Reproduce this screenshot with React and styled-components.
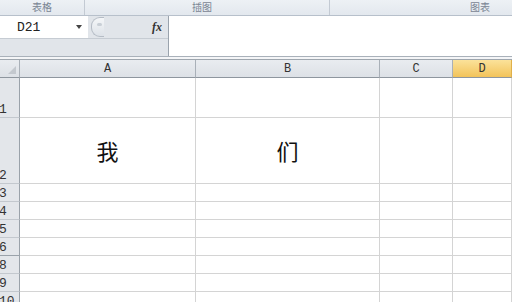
import React from 'react';
import styled, { createGlobalStyle } from 'styled-components';

const Global = createGlobalStyle`
  html, body { margin: 0; padding: 0; background: #fff; overflow: hidden; }
  body { font-family: "Liberation Sans", "Noto Sans CJK SC", sans-serif; }
`;

const Page = styled.div`
  width: 512px;
  height: 302px;
  overflow: hidden;
  display: flex;
  flex-direction: column;
  background: #fff;
  & > * { flex-shrink: 0; }
`;

const Ribbon = styled.div`
  height: 15px;
  display: grid;
  grid-template-columns: 85px 245px 1fr;
  background: linear-gradient(#edf1f5, #e3e8ee);
  border-bottom: 1px solid #b7c0cb;
`;

const GroupLabel = styled.div`
  font-family: "Noto Sans CJK SC", sans-serif;
  font-size: 10px;
  line-height: 14px;
  color: #7a8593;
  text-align: ${p => p.align || 'center'};
  padding-right: ${p => p.pr || 0}px;
  border-right: ${p => (p.sep ? '1px solid #c3cad3' : 'none')};
`;

const FormulaRow = styled.div`
  height: 40px;
  display: flex;
  background: #e1e5ea;
  border-bottom: 1px solid #a9b1ba;
`;

const LeftPane = styled.div`
  width: 168px;
  display: flex;
  flex-direction: column;
`;

const NameRow = styled.div`
  height: 22px;
  display: flex;
  align-items: center;
  border-bottom: 1px solid #c6ccd3;
`;

const NameBox = styled.div`
  width: 88px;
  height: 22px;
  background: #fff;
  display: flex;
  align-items: center;
  justify-content: space-between;
  padding: 0 6px 0 17px;
  box-sizing: border-box;
  font-family: "Liberation Mono", monospace;
  font-size: 13px;
  color: #222;
`;

const Caret = styled.span`
  width: 0;
  height: 0;
  border-left: 3px solid transparent;
  border-right: 3px solid transparent;
  border-top: 4px solid #444;
`;

const Pill = styled.div`
  width: 12px;
  height: 18px;
  margin-left: 3px;
  border: 1px solid #b5bcc5;
  border-radius: 9px 0 0 9px;
  border-right: none;
  background: linear-gradient(#f4f6f8, #dde2e8);
  position: relative;
  &::after {
    content: '';
    position: absolute;
    left: 5px;
    top: 5px;
    width: 5px;
    height: 3px;
    border-radius: 2px;
    background: #c9cfd6;
  }
`;

const Fx = styled.span`
  margin-left: auto;
  margin-right: 6px;
  font-family: "Liberation Serif", serif;
  font-style: italic;
  font-weight: bold;
  font-size: 12px;
  color: #333;
`;

const FormulaInput = styled.div`
  flex: 1;
  background: #fff;
  border-left: 1px solid #9aa3ad;
`;

const Spacer = styled.div`
  height: 2px;
  background: #f4f5f7;
  border-bottom: 1px solid #9ea6ae;
`;

const Sheet = styled.div`
  flex: 1 1 auto !important;
  min-height: 0;
  overflow: hidden;
  display: grid;
  grid-template-columns: 20px 176px 184px 73px 1fr;
  grid-template-rows: 18px 40px 66px repeat(7, 18px);
`;

const ColHead = styled.div`
  background: ${p => (p.active ? 'linear-gradient(#fbe29a, #f2c35a)' : 'linear-gradient(#e9ecf0, #dde1e6)')};
  border-right: 1px solid ${p => (p.active ? '#e0b04a' : '#a9b0b8')};
  border-bottom: 1px solid #8e969e;
  font-family: "Liberation Mono", monospace;
  font-size: 12px;
  color: #333;
  display: flex;
  align-items: center;
  justify-content: center;
`;

const Corner = styled(ColHead)`
  position: relative;
  &::after {
    content: '';
    position: absolute;
    right: 3px;
    bottom: 3px;
    border-left: 8px solid transparent;
    border-bottom: 8px solid #c3c8ce;
  }
`;

const RowHead = styled.div`
  background: #e3e6ea;
  border-right: 1px solid #9aa2aa;
  border-bottom: 1px solid ${p => (p.$strong ? '#9aa2aa' : '#c3c8ce')};
  font-family: "Liberation Mono", monospace;
  font-size: 13px;
  line-height: 14px;
  color: #333;
  display: flex;
  align-items: flex-end;
  margin-left: -1px;
`;

const Cell = styled.div`
  border-right: 1px solid #d4d4d4;
  border-bottom: 1px solid #d4d4d4;
  display: flex;
  align-items: center;
  justify-content: center;
  font-family: "Noto Sans CJK SC", sans-serif;
  font-size: 22px;
  color: #111;
  padding-bottom: 2px;
  box-sizing: border-box;
`;

const rows = [
  { n: '1', v: [] },
  { n: '2', v: ['我', '们'] },
  { n: '3' }, { n: '4' }, { n: '5' }, { n: '6', strong: true }, { n: '8' }, { n: '9' }, { n: '10' },
];

export default function App() {
  return (
    <Page>
      <Global />
      <Ribbon>
        <GroupLabel sep>表格</GroupLabel>
        <GroupLabel sep pr={10}>插图</GroupLabel>
        <GroupLabel align="right" pr={22}>图表</GroupLabel>
      </Ribbon>
      <FormulaRow>
        <LeftPane>
          <NameRow>
            <NameBox>D21<Caret /></NameBox>
            <Pill />
            <Fx>fx</Fx>
          </NameRow>
        </LeftPane>
        <FormulaInput />
      </FormulaRow>
      <Spacer />
      <Sheet>
        <Corner />
        <ColHead>A</ColHead>
        <ColHead>B</ColHead>
        <ColHead>C</ColHead>
        <ColHead active>D</ColHead>
        {rows.map(r => (
          <React.Fragment key={r.n}>
            <RowHead $strong={r.strong}>{r.n}</RowHead>
            <Cell>{r.v && r.v[0]}</Cell>
            <Cell>{r.v && r.v[1]}</Cell>
            <Cell />
            <Cell />
          </React.Fragment>
        ))}
      </Sheet>
    </Page>
  );
}
